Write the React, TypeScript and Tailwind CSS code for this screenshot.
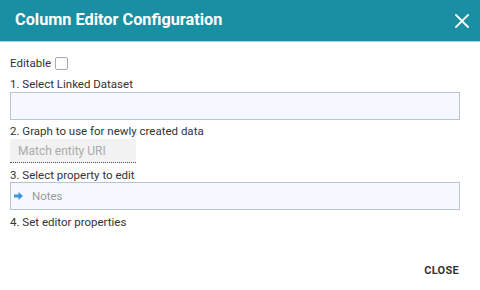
import React from "react";

const font = { fontFamily: "Roboto, 'Liberation Sans', sans-serif" };

export default function App() {
  return (
    <div className="w-[480px] h-[290px] bg-white flex flex-col text-[#333]" style={font}>
      <div className="h-[42px] bg-[#1a8fa3] border-b border-[#9fd3e0] flex items-center justify-between pl-[15px] pr-[10px] shrink-0">
        <span className="text-white font-bold text-[16.3px]">Column Editor Configuration</span>
        <svg width="14" height="14" viewBox="0 0 14 14" className="mr-[1px]">
          <path d="M1 1 L13 13 M13 1 L1 13" stroke="#fff" strokeWidth="1.8" strokeLinecap="square" />
        </svg>
      </div>
      <div className="flex flex-col px-[10px] pt-[14px] text-[11.5px] leading-[14px]">
        <div className="flex items-center gap-[4px] h-[14px]">
          <span>Editable</span>
          <span className="w-[13px] h-[13px] border border-[#aaa] rounded-[2px] bg-white" />
        </div>
        <div className="mt-[7px]">1. Select Linked Dataset</div>
        <div className="mt-[1px] w-[450px] h-[28px] bg-[#f5f9ff] border border-[#b8c4d0]" />
        <div className="mt-[4px]">2. Graph to use for newly created data</div>
        <div className="mt-[1px] w-[126px] h-[24px] bg-[#f2f2f2] border-b border-dotted border-[#555] flex items-center pl-[8px] text-[12px] text-[#aaa]">
          Match entity URI
        </div>
        <div className="mt-[5px]">3. Select property to edit</div>
        <div className="w-[450px] h-[28px] bg-[#f5f9ff] border border-[#b8c4d0] flex items-center pl-[3px] text-[#999]">
          <svg width="9" height="8" viewBox="0 0 9 8" className="mr-[9px]">
            <path d="M0 2.5 H4.5 V0 L9 4 L4.5 8 V5.5 H0 Z" fill="#3c96dc" />
          </svg>
          Notes
        </div>
        <div className="mt-[5px]">4. Set editor properties</div>
      </div>
      <div className="flex-1" />
      <div className="flex justify-end pr-[21px] pb-[11px]">
        <span className="font-bold text-[11px] tracking-[0.3px] text-[#333]">CLOSE</span>
      </div>
    </div>
  );
}
